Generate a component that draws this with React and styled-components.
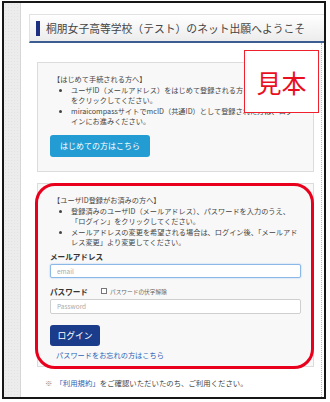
import styled, { createGlobalStyle } from "styled-components";

const GlobalStyle = createGlobalStyle`
  html, body {
    margin: 0;
    padding: 0;
    background: #ffffff;
  }
  body {
    font-family: "Noto Sans CJK JP", "Noto Sans", sans-serif;
    color: #444;
  }
`;

const Frame = styled.div`
  position: relative;
  box-sizing: border-box;
  width: 324px;
  height: 398px;
  margin: 1px 0 0 2px;
  border: 2px solid #161616;
  display: flex;
  overflow: hidden;
  background: #fff;
`;

const Strip = styled.div`
  width: 16px;
  flex-shrink: 0;
  background-color: #ececec;
  background-image: radial-gradient(#e2e2e2 0.6px, transparent 0.7px);
  background-size: 3px 3px;
  border-right: 1px solid #d6d6d6;
`;

const Main = styled.div`
  flex: 1;
  display: flex;
  flex-direction: column;
  padding-top: 11px;
  min-width: 0;
`;

const Header = styled.div`
  box-sizing: border-box;
  height: 29px;
  margin-left: 8px;
  padding-left: 6px;
  display: flex;
  align-items: center;
  background: linear-gradient(#ffffff, #ececec);
  border-top: 1px solid #e2e2e2;
  border-left: 1px solid #e2e2e2;
  border-bottom: 2px solid #3d5d92;
`;

const HeaderBar = styled.span`
  width: 4px;
  height: 15px;
  background: #1c2f80;
  margin-right: 6px;
  flex-shrink: 0;
`;

const Title = styled.h1`
  margin: 0;
  font-size: 10.8px;
  font-weight: 400;
  color: #444;
  white-space: nowrap;
  letter-spacing: 0;
`;

const Body = styled.div`
  flex: 1;
  margin-right: 2px;
  border-right: 1px dotted #b9b9b9;
  padding: 19px 0 0 16px;
`;

const Panel = styled.section`
  position: relative;
  box-sizing: border-box;
  width: 277px;
  margin-top: ${(p) => p.$gap || 0}px;
  padding: 11px 12px ${(p) => p.$bottom}px;
  background: #f8f8f8;
  border: 1px solid #dcdcdc;
`;

const Notice = styled.div`
  padding-left: 3px;
  font-size: 7.2px;
  line-height: 10.6px;
  color: #444;
  white-space: nowrap;
`;

const Bullets = styled.ul`
  margin: 0;
  padding-left: 18px;
  list-style: disc;
`;

const StartButton = styled.button`
  display: block;
  margin-top: 8px;
  width: 100px;
  height: 22px;
  padding: 0;
  border: none;
  border-radius: 3px;
  background: #239cd3;
  color: #fff;
  font-family: inherit;
  font-size: 8px;
`;

const Label = styled.div`
  display: flex;
  align-items: center;
  margin-top: ${(p) => p.$gap}px;
  font-size: 7.6px;
  line-height: 11px;
  font-weight: 700;
  color: #333;
`;

const Check = styled.span`
  box-sizing: border-box;
  width: 6px;
  height: 6px;
  margin: 0 3px 0 13px;
  border: 1px solid #777;
  background: #fff;
`;

const CheckText = styled.span`
  font-size: 5.7px;
  font-weight: 400;
  color: #666;
`;

const Input = styled.input`
  box-sizing: border-box;
  display: block;
  width: 100%;
  height: ${(p) => p.$h}px;
  margin-top: ${(p) => p.$gap}px;
  padding: 0 6px;
  background: #fff;
  border: 1px solid ${(p) => (p.$focus ? "#8bb8e6" : "#cfcfcf")};
  box-shadow: ${(p) => (p.$focus ? "0 0 2px #a6cbef" : "none")};
  border-radius: 2px;
  font-family: inherit;
  font-size: 6.5px;
  outline: none;
  &::placeholder {
    color: #aaa;
  }
`;

const LoginButton = styled.button`
  display: block;
  margin-top: 11px;
  width: 50px;
  height: 21px;
  padding: 0;
  border: none;
  border-radius: 3px;
  background: #1b3b8b;
  color: #fff;
  font-family: inherit;
  font-size: 8.8px;
`;

const Link = styled.a`
  display: block;
  margin: 4px 0 0 6px;
  font-size: 7.2px;
  line-height: 10px;
  color: #2f5fb3;
  text-decoration: none;
`;

const Highlight = styled.div`
  position: absolute;
  top: -1px;
  left: -3px;
  right: -1px;
  bottom: -3px;
  border: 3px solid #e8001c;
  border-radius: 20px;
  pointer-events: none;
`;

const Footer = styled.p`
  margin: 11px 0 0 8px;
  font-size: 7.4px;
  line-height: 10px;
  color: #444;
  white-space: nowrap;
`;

const Mark = styled.span`
  color: #888;
  margin-right: 3px;
`;

const Blue = styled.span`
  color: #2f5fb3;
`;

const Stamp = styled.div`
  position: absolute;
  left: 240px;
  top: 47px;
  box-sizing: border-box;
  width: 75px;
  height: 63px;
  display: flex;
  align-items: center;
  justify-content: center;
  background: #fff;
  border: 1px solid #f0202c;
  color: #ea0f1f;
  font-size: 25px;
  font-weight: 400;
  letter-spacing: 0;
`;

export default function App() {
  return (
    <>
      <GlobalStyle />
      <Frame>
        <Strip />
        <Main>
          <Header>
            <HeaderBar />
            <Title>桐朋女子高等学校（テスト）のネット出願へようこそ</Title>
          </Header>
          <Body>
            <Panel $bottom={14}>
              <Notice>
                【はじめて手続される方へ】
                <Bullets>
                  <li>
                    ユーザID（メールアドレス）をはじめて登録される方は、下のボタン
                    <br />
                    をクリックしてください。
                  </li>
                  <li>
                    miraicompassサイトでmcID（共通ID）として登録された方は、ログ
                    <br />
                    インにお進みください。
                  </li>
                </Bullets>
              </Notice>
              <StartButton>はじめての方はこちら</StartButton>
            </Panel>

            <Panel $gap={11} $bottom={6}>
              <Notice>
                【ユーザID登録がお済みの方へ】
                <Bullets>
                  <li>
                    登録済みのユーザID（メールアドレス）、パスワードを入力のうえ、
                    <br />
                    「ログイン」をクリックしてください。
                  </li>
                  <li>
                    メールアドレスの変更を希望される場合は、ログイン後、「メールアド
                    <br />
                    レス変更」より変更してください。
                  </li>
                </Bullets>
              </Notice>
              <Label $gap={3}>メールアドレス</Label>
              <Input $h={14} $gap={2} $focus placeholder="email" />
              <Label $gap={8}>
                パスワード
                <Check />
                <CheckText>パスワードの伏字解除</CheckText>
              </Label>
              <Input $h={15} $gap={2} type="password" placeholder="Password" />
              <LoginButton>ログイン</LoginButton>
              <Link href="#">パスワードをお忘れの方はこちら</Link>
              <Highlight />
            </Panel>

            <Footer>
              <Mark>※</Mark>
              <Blue>「利用規約」</Blue>をご確認いただいたのち、ご利用ください。
            </Footer>
          </Body>
        </Main>
        <Stamp>見本</Stamp>
      </Frame>
    </>
  );
}
